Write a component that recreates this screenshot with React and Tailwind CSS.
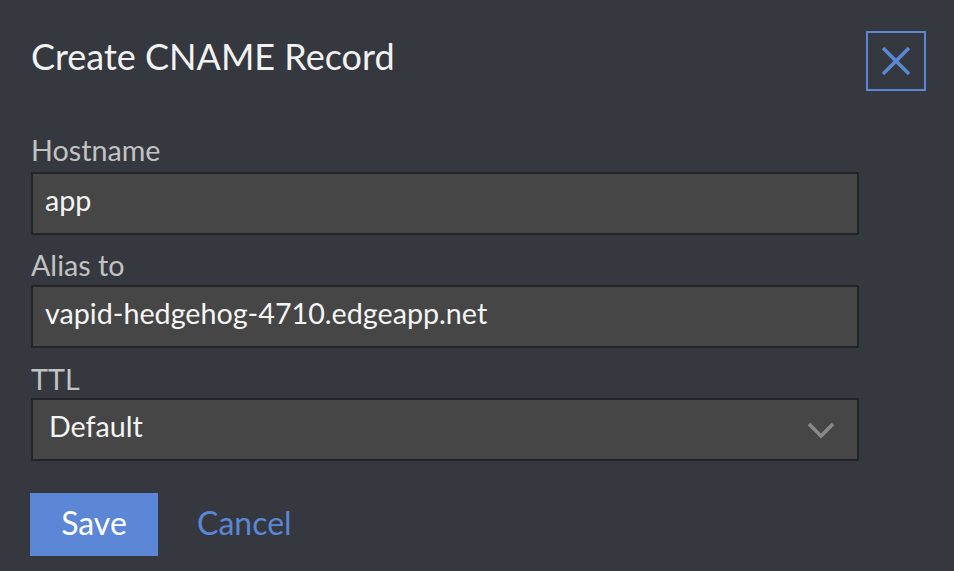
export default function App() {
  return (
    <div className="w-[954px] h-[571px] bg-[#35383e] overflow-hidden" style={{ fontFamily: "Lato, 'Noto Sans', sans-serif" }}>
      <div className="flex items-start justify-between pl-[31px] pr-[28px] pt-[31px]">
        <h1 className="text-[36px] leading-[36px] text-[#f2f2f2] mt-[7px]">Create CNAME Record</h1>
        <button className="w-[60px] h-[60px] border-2 border-[#5b87d6] flex items-center justify-center">
          <svg width="30" height="30" viewBox="0 0 30 30" fill="none" stroke="#5b87d6" strokeWidth="3.5">
            <line x1="2" y1="2" x2="28" y2="28" />
            <line x1="28" y1="2" x2="2" y2="28" />
          </svg>
        </button>
      </div>
      <div className="pl-[31px] w-[859px] mt-[43px] flex flex-col">
        <label className="text-[28.7px] leading-[34px] text-[#c2c2c2] -mt-[1px] mb-[1px]">Hostname</label>
        <div className="mt-[4px] h-[63px] border-2 border-[#232427] bg-[#464646] flex items-center pl-[12px] pb-[6px] text-[28.7px] text-[#f5f5f5]">app</div>
        <label className="text-[28.7px] leading-[34px] text-[#c2c2c2] mt-[13px]">Alias to</label>
        <div className="mt-[3px] h-[63px] border-2 border-[#232427] bg-[#464646] flex items-center pl-[12px] pb-[6px] text-[28.7px] text-[#f5f5f5]">vapid-hedgehog-4710.edgeapp.net</div>
        <label className="text-[28.7px] leading-[34px] text-[#c2c2c2] mt-[14px]">TTL</label>
        <div className="mt-[2px] h-[63px] border-2 border-[#232427] bg-[#464646] flex items-center justify-between pl-[16px] pr-[22px] text-[28.7px] text-[#f5f5f5]">
          <span className="mb-[6px]">Default</span>
          <svg width="28" height="18" viewBox="0 0 28 18" fill="none" stroke="#8a8a8a" strokeWidth="3.5">
            <polyline points="2,3 14,15 26,3" />
          </svg>
        </div>
        <div className="flex items-center mt-[32px]">
          <button className="w-[128px] h-[63px] bg-[#5b87d6] text-white text-[32px] -ml-[1px] pb-[4px]">Save</button>
          <button className="ml-[39px] text-[32px] text-[#5b87d6] pb-[4px]">Cancel</button>
        </div>
      </div>
    </div>
  );
}
